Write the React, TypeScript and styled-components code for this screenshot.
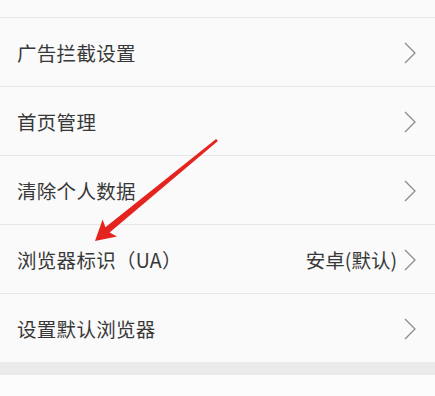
import React from "react";
import styled, { createGlobalStyle } from "styled-components";

const GlobalStyle = createGlobalStyle`
  html, body {
    margin: 0;
    padding: 0;
    background: #fafafa;
  }
  body {
    font-family: "Noto Sans CJK SC", "Noto Sans", sans-serif;
  }
`;

const Page = styled.div`
  position: relative;
  width: 435px;
  height: 396px;
  overflow: hidden;
  background: #fafafa;
`;

const Group = styled.div`
  display: flex;
  flex-direction: column;
  background: #fafafa;
`;

const TopSlice = styled.div`
  height: 17px;
`;

const Row = styled.div`
  display: flex;
  align-items: center;
  border-top: 1px solid #e6e6e6;
  padding: 1px 19px 0 17px;
  height: 67px;
`;

const Label = styled.span`
  flex: 1;
  font-size: 19.5px;
  color: #383838;
  letter-spacing: 0.3px;
`;

const Value = styled.span`
  font-size: 19.5px;
  color: #383838;
  margin-right: 7px;
`;

const Chevron = styled.svg`
  width: 12px;
  height: 22px;
  flex-shrink: 0;
`;

const Band = styled.div`
  height: 13px;
  background: #ebebeb;
`;

const Bottom = styled.div`
  height: 30px;
  background: #fcfcfc;
`;

const Overlay = styled.svg`
  position: absolute;
  left: 0;
  top: 0;
  width: 435px;
  height: 396px;
  pointer-events: none;
`;

const Arrow = () => (
  <Chevron viewBox="0 0 12 22">
    <polyline
      points="1,1 11,11 1,21"
      fill="none"
      stroke="#8c8c8c"
      strokeWidth="1.3"
    />
  </Chevron>
);

const items: { label: string; value?: string }[] = [
  { label: "广告拦截设置" },
  { label: "首页管理" },
  { label: "清除个人数据" },
  { label: "浏览器标识（UA）", value: "安卓(默认)" },
  { label: "设置默认浏览器" },
];

const App: React.FC = () => {
  return (
    <Page>
      <GlobalStyle />
      <Group>
        <TopSlice />
        {items.map((item) => (
          <Row key={item.label}>
            <Label>{item.label}</Label>
            {item.value && <Value>{item.value}</Value>}
            <Arrow />
          </Row>
        ))}
      </Group>
      <Band />
      <Bottom />
      <Overlay viewBox="0 0 435 396">
        <polygon
          points="95,241 117,236.5 109.6,232.6 217.9,141 216.1,139 105.4,227.3 102.6,219.5"
          fill="#e5231f"
        />
      </Overlay>
    </Page>
  );
};

export default App;
